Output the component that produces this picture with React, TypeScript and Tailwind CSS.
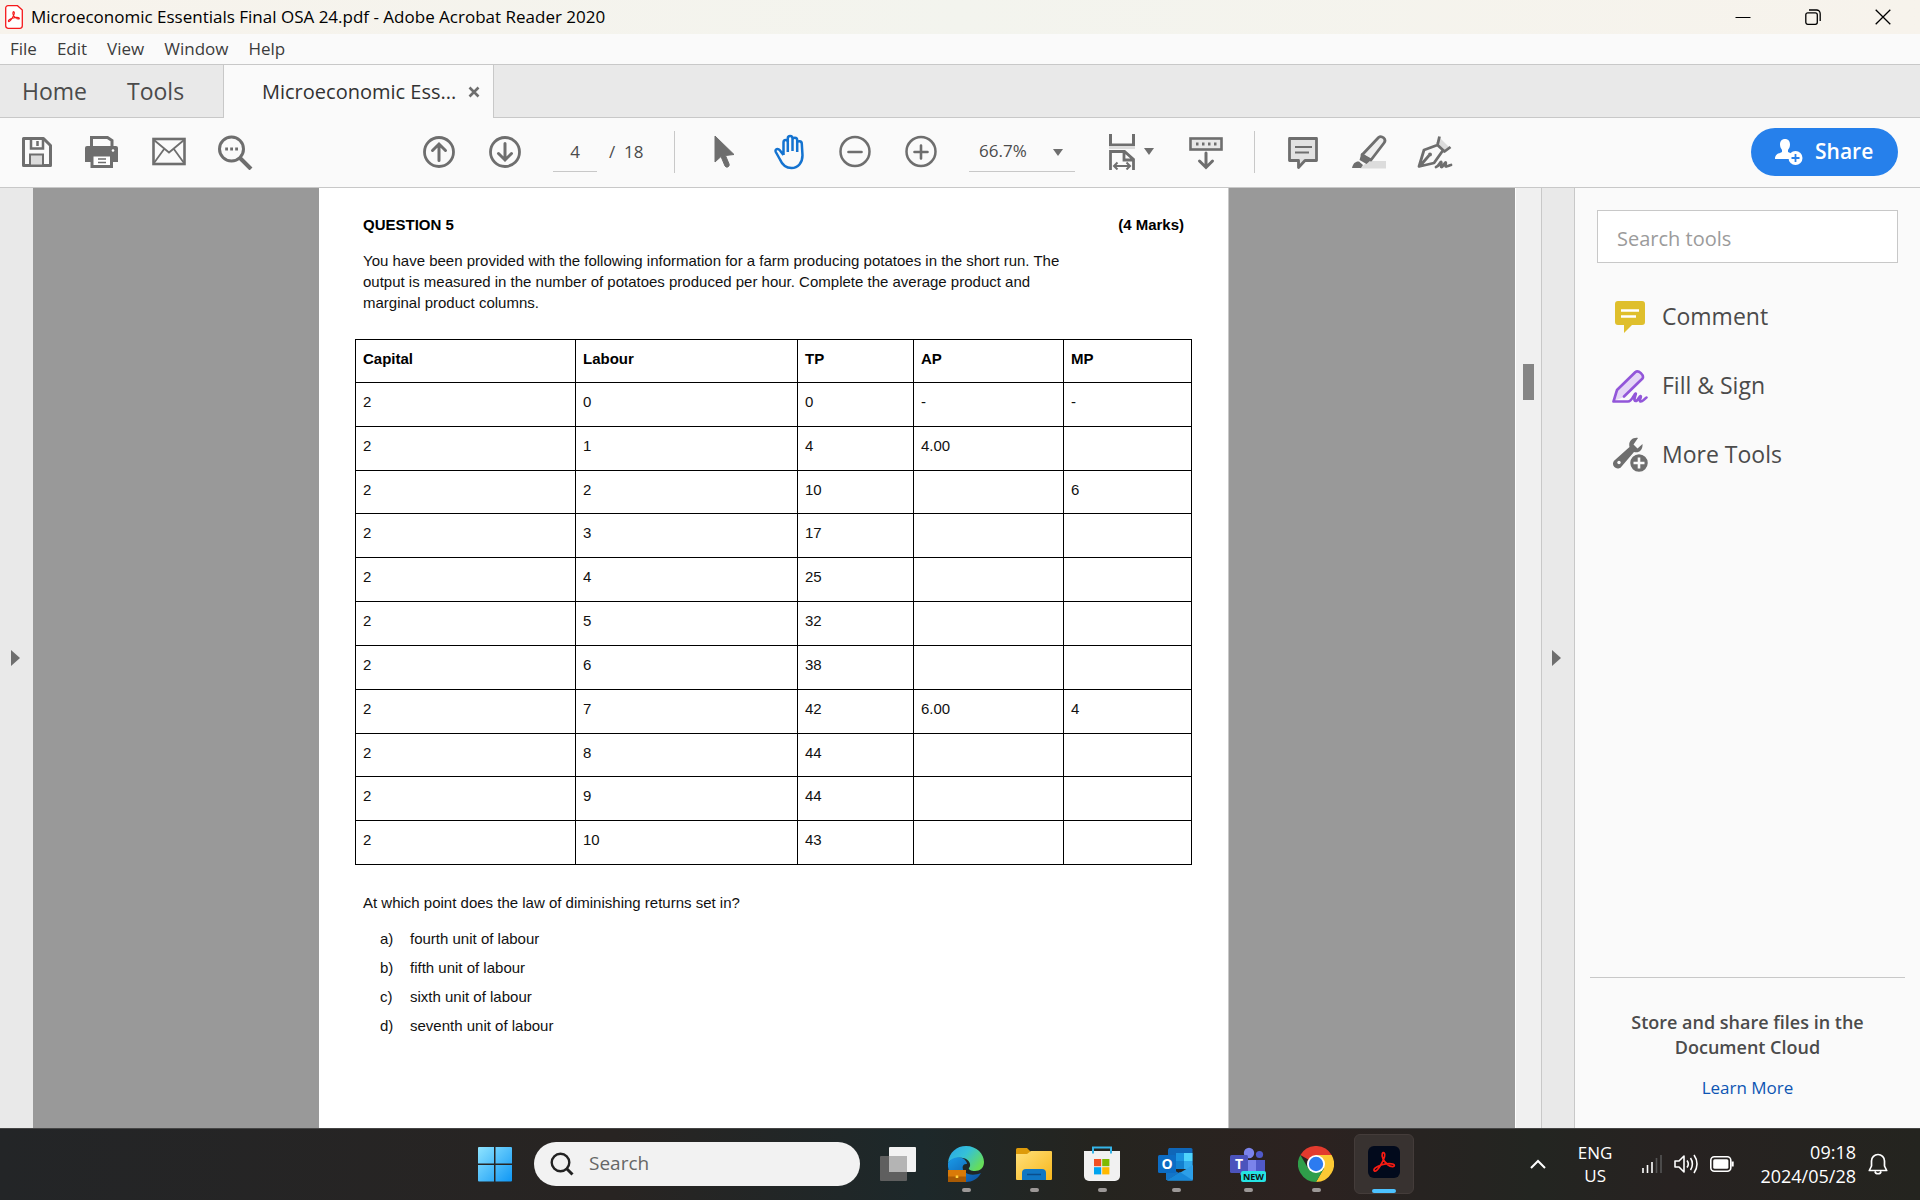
import { useState } from "react";
import type { ReactNode } from "react";

const rows = [
  ["2", "0", "0", "-", "-"],
  ["2", "1", "4", "4.00", ""],
  ["2", "2", "10", "", "6"],
  ["2", "3", "17", "", ""],
  ["2", "4", "25", "", ""],
  ["2", "5", "32", "", ""],
  ["2", "6", "38", "", ""],
  ["2", "7", "42", "6.00", "4"],
  ["2", "8", "44", "", ""],
  ["2", "9", "44", "", ""],
  ["2", "10", "43", "", ""],
];

const answers = [
  ["a)", "fourth unit of labour"],
  ["b)", "fifth unit of labour"],
  ["c)", "sixth unit of labour"],
  ["d)", "seventh unit of labour"],
];

const Icon = ({ children, size = "size-9" }: { children: ReactNode; size?: string }) => (
  <svg viewBox="0 0 36 36" className={size} fill="none" stroke="currentColor" strokeWidth="3">
    {children}
  </svg>
);

const ToolButton = ({ label, children, className = "" }: { label: string; children: ReactNode; className?: string }) => (
  <button aria-label={label} className={"size-9 shrink-0 " + className}>
    <Icon>{children}</Icon>
  </button>
);

const Caret = ({ className = "" }: { className?: string }) => (
  <svg viewBox="0 0 10 7" className={"h-[7px] w-[10px] " + className} fill="currentColor">
    <path d="M0 0h10L5 7z" />
  </svg>
);

const TitleBar = () => (
  <header className="flex h-[34px] shrink-0 items-center bg-linear-to-r from-[#f7f3ec] via-[#f3f4ee] to-[#f7f3ec] pr-0.5 pl-[5px] text-black">
    <svg viewBox="0 0 18 24" className="h-6 w-[18px] text-[#f5191b]" fill="#fff" stroke="currentColor">
      <path d="M3 .7h9.500L17.300 5v15.800a2.500 2.500 0 0 1-2.500 2.500H3A2.500 2.500 0 0 1 .7 20.800V3A2.300 2.300 0 0 1 3 .7z" strokeWidth="1.300" />
      <path d="M3.700 16.500c-1-.7.8-2.300 3.500-3.200 2.500-.8 5.800-1.200 6.900-.3.9 1-1.300 1.600-3.200.1-1.900-1.300-3.500-4-2.900-5.700.5-1.400 1.700-.5 1.200 1.500-.8 2.600-4.200 8.400-5.500 7.600z" fill="none" strokeWidth="1.200" />
    </svg>
    <h1 className="ml-2 flex-1 text-[17px]">Microeconomic Essentials Final OSA 24.pdf - Adobe Acrobat Reader 2020</h1>
    <button aria-label="Minimize" className="flex w-[70px] justify-center">
      <svg viewBox="0 0 16 16" className="size-4" fill="none" stroke="currentColor"><path d="M.5 8.500h15" /></svg>
    </button>
    <button aria-label="Restore" className="flex w-[70px] justify-center">
      <svg viewBox="0 0 16 16" className="size-4" fill="none" stroke="currentColor" strokeWidth="1.300">
        <rect x=".8" y="3.800" width="11.500" height="11.500" rx="2" />
        <path d="M4 1h7.500A3.700 3.700 0 0 1 15.200 4.700V12" />
      </svg>
    </button>
    <button aria-label="Close" className="flex w-[70px] justify-center">
      <svg viewBox="0 0 16 16" className="size-4" fill="none" stroke="currentColor" strokeWidth="1.300"><path d="m.7.7 14.600 14.600M15.300.7.7 15.300" /></svg>
    </button>
  </header>
);

const MenuBar = () => (
  <nav className="flex h-[31px] shrink-0 items-center gap-5 border-b border-[#c8c8c8] bg-[#fafafa] pl-[10px] text-[17px] text-[#3c3c3c]">
    {["File", "Edit", "View", "Window", "Help"].map((item) => (
      <button key={item}>{item}</button>
    ))}
  </nav>
);

const TabBar = () => (
  <div className="flex h-[53px] shrink-0 bg-[#e9e9e9]">
    <div className="flex w-[223px] items-center gap-10 border-b border-[#c8c8c8] pl-[22px] text-[23px] text-[#4b4b4b]">
      <button>Home</button>
      <button>Tools</button>
    </div>
    <div className="flex w-[271px] items-center border-x border-[#c8c8c8] bg-[#fafafa] pl-[38px] text-[#323232]">
      <button className="text-xl">Microeconomic Ess...</button>
      <button aria-label="Close tab" className="ml-3 text-[#6e6e6e]">
        <svg viewBox="0 0 12 12" className="size-3" fill="none" stroke="currentColor" strokeWidth="2.600"><path d="m1.500 1.500 9 9M10.500 1.500l-9 9" /></svg>
      </button>
    </div>
    <div className="flex-1 border-b border-[#c8c8c8]" />
  </div>
);

const Toolbar = () => {
  const [page, setPage] = useState("4");
  const [zoom, setZoom] = useState("66.7%");

  return (
    <div className="flex h-[70px] shrink-0 items-center gap-[30px] border-b border-[#c8c8c8] bg-[#fafafa] pr-[22px] pb-0.5 pl-[19px] text-[#6e6e6e]">
      <ToolButton label="Save">
        <path d="M4.500 4.500h20l7 7v20h-27z" strokeLinejoin="round" />
        <path d="M12 4.500v10h12v-10M18.500 7v5" strokeWidth="2.500" />
        <path d="M11 31.500v-11h13v11z" fill="#dcdcdc" strokeWidth="2" />
      </ToolButton>
      <ToolButton label="Print">
        <path d="M6.500 14V3.500h16l4.500 3V14" />
        <path d="M2 12h29a2 2 0 0 1 2 2v14H0V14a2 2 0 0 1 2-2z" fill="currentColor" stroke="none" />
        <path d="M7 21v11.500h19.500V21z" fill="#fff" strokeWidth="3" />
        <path d="M13 25h8M13 28.500h8" strokeWidth="1.600" />
        <circle cx="28" cy="16.500" r="1.300" fill="#fff" stroke="none" />
      </ToolButton>
      <ToolButton label="Send file by email">
        <rect x="2.500" y="5" width="31" height="25" strokeWidth="2.600" />
        <path d="m3 6 15 12.500L33 6M3 29l10.500-14.500M33 29 22.500 14.500" strokeWidth="1.800" />
      </ToolButton>
      <ToolButton label="Find text">
        <circle cx="14.500" cy="15" r="12" />
        <path d="m23 24 11 11" strokeWidth="4" />
        <path d="M8.200 15h2.800M13.200 15H16M18.200 15H21" strokeWidth="2.800" />
      </ToolButton>
      <ToolButton label="Previous page" className="ml-[138px]">
        <circle cx="18" cy="18" r="14.500" strokeWidth="2.800" />
        <path d="M18 26.500v-16m-6.500 6L18 10l6.500 6.500" strokeLinecap="round" />
      </ToolButton>
      <ToolButton label="Next page">
        <circle cx="18" cy="18" r="14.500" strokeWidth="2.800" />
        <path d="M18 9.500v16m-6.500-6L18 26l6.500-6.500" strokeLinecap="round" />
      </ToolButton>
      <div className="flex items-center gap-3 text-[17px] text-[#4b4b4b]">
        <input
          aria-label="Page number"
          value={page}
          onChange={(e) => setPage(e.target.value)}
          className="h-10 w-11 border-b border-[#c8c8c8] bg-transparent text-center outline-none"
        />
        <span className="w-[35px] whitespace-pre">/  18</span>
      </div>
      <div className="h-[42px] w-px bg-[#c8c8c8]" />
      <ToolButton label="Selection tool">
        <path d="M10 2v26l6-5.500 4 9.500a2.300 2.300 0 0 0 4.200-1.700L20.500 21.500l8.500-1z" fill="currentColor" stroke="currentColor" strokeWidth="1" strokeLinejoin="round" />
      </ToolButton>
      <ToolButton label="Hand tool" className="text-[#1473d0]">
        <path
          d="M10 21V8.500c0-3.200 4.300-3.200 4.300 0V18M14.300 8V4.500c0-3.300 4.700-3.300 4.700 0V17M19 6c0-3 4.700-3 4.700.3V18M23.700 9.500c0-3.300 4.600-3 4.600.3l.7 11.500c0 7.500-4.500 12.700-11 12.700-5.500 0-9.300-3.300-11.500-8.500L2.300 18C1 15 4.500 14 6.300 16.300L10 21"
          transform="translate(2.500 0)"
          strokeWidth="2.500"
          strokeLinejoin="round"
        />
      </ToolButton>
      <ToolButton label="Zoom out">
        <circle cx="18" cy="17.500" r="14.500" strokeWidth="2.500" />
        <path d="M11.500 18h13" strokeLinecap="round" strokeWidth="2.600" />
      </ToolButton>
      <ToolButton label="Zoom in">
        <circle cx="18" cy="17.500" r="14.500" strokeWidth="2.500" />
        <path d="M11.500 18h13M18 11.500v13" strokeLinecap="round" strokeWidth="2.600" />
      </ToolButton>
      <div className="relative">
        <select
          aria-label="Zoom level"
          value={zoom}
          onChange={(e) => setZoom(e.target.value)}
          className="h-10 w-[106px] appearance-none border-b border-[#c8c8c8] bg-transparent pl-[10px] text-[17px] text-[#4b4b4b] outline-none"
        >
          <option>50%</option>
          <option>66.7%</option>
          <option>100%</option>
        </select>
        <Caret className="pointer-events-none absolute top-[17px] right-3" />
      </div>
      <button aria-label="Fit page" className="-ml-px flex w-[54px] shrink-0 items-center gap-1">
        <Icon>
          <path d="M6.500 0v11h23V0" />
          <path d="M5 13.500h26" stroke="#dcdcdc" />
          <path d="M6.500 36V17.500h14l9 8V36M20 17v9h9" strokeWidth="2.800" />
          <path d="M10.500 32h15m-12-3.500L10 32l3.500 3.500m9-7L26 32l-3.500 3.500" strokeWidth="2" />
        </Icon>
        <Caret className="shrink-0" />
      </button>
      <ToolButton label="Read mode">
        <rect x="2.500" y="4.500" width="31" height="11" fill="#e8e8e8" strokeWidth="2.600" />
        <path d="M8 10h2.500M14 10h2.500M20 10h2.500M26 10h2.500" />
        <path d="M18 19v14m-6.500-6L18 33.500l6.500-6.500" strokeLinecap="round" />
      </ToolButton>
      <div className="h-[42px] w-px bg-[#c8c8c8]" />
      <ToolButton label="Add comment">
        <path d="M4.500 4.500h27v22H20l-6.500 7v-7h-9z" fill="#e2e2e2" strokeWidth="2.800" strokeLinejoin="round" />
        <path d="M10 13h17M10 18.500h14" strokeWidth="1.800" />
      </ToolButton>
      <ToolButton label="Highlight">
        <path d="M9 34.500h26V27H17z" fill="#dcdcdc" stroke="none" />
        <path d="M27.500 3.500c3-2.500 8.500 1.500 5.500 5.500L20 26l-9-5z" fill="#eee" strokeWidth="2.800" strokeLinejoin="round" />
        <path d="m10.500 19 10 6.500-5 4.500-7-4zM1 34c1-5 4-7 7-6.500L12 31l-2 3z" fill="currentColor" stroke="none" />
      </ToolButton>
      <ToolButton label="Sign">
        <path d="m23 4 10 10-4 3-10-8z" fill="#dcdcdc" stroke="none" />
        <path d="m22.500 2.500-2 8.500 7 6.500 6-4.500M20.500 11 7 16 2 32.500 17 29l8.500-12M3 32l9-10.500" strokeWidth="2.800" strokeLinejoin="round" />
        <circle cx="13" cy="20.500" r="2" fill="currentColor" stroke="none" />
        <path d="M19 33c3-1 4-5 5-5s-1 5 .5 5 3-4.500 4-4.500-1 4 .5 4 3-1 5-1.500" strokeWidth="2.800" strokeLinecap="round" />
      </ToolButton>
      <button className="ml-auto flex h-12 w-[147px] items-center rounded-full bg-[#2680eb] pl-6 text-[21px] font-semibold text-white">
        <svg viewBox="0 0 28 28" className="mr-3 size-7" fill="#fff">
          <path d="M10 1c3.200 0 5 2.200 5 5.500 0 2.500-1 4-2 5.500v2c1.500.8 3 1.400 4.200 2.300-2 1.200-3.400 3.200-3.200 4.700H0c0-5 4-5.500 7-7v-2C6 10.500 5 9 5 6.500 5 3.200 6.800 1 10 1z" />
          <circle cx="20.500" cy="20" r="7" />
          <path d="M20.500 16v8M16.500 20h8" stroke="#2680eb" strokeWidth="1.800" />
        </svg>
        Share
      </button>
    </div>
  );
};

const Document = () => (
  <article className="min-h-full w-[910px] border-r border-[#c8c8c8] bg-white pt-[26px] pl-9 font-['Liberation_Sans',Arial,sans-serif] text-[15px] leading-[21px] text-[#111]">
    <div className="flex w-[829px] justify-between pl-2 font-bold text-black">
      <h2>QUESTION 5</h2>
      <span>(4 Marks)</span>
    </div>
    <p className="mt-[15px] w-[740px] pl-2">
      You have been provided with the following information for a farm producing potatoes in the short run. The
      <br />
      output is measured in the number of potatoes produced per hour. Complete the average product and
      <br />
      marginal product columns.
    </p>
    <table className="mt-[26px] h-[526px] w-[837px] table-fixed border-collapse text-left">
      <colgroup>
        <col className="w-[220px]" />
        <col className="w-[222px]" />
        <col className="w-[116px]" />
        <col className="w-[150px]" />
        <col />
      </colgroup>
      <thead>
        <tr className="h-[43px]">
          {["Capital", "Labour", "TP", "AP", "MP"].map((name) => (
            <th key={name} className="border border-black px-[7px] pt-2 align-top font-bold text-black">
              {name}
            </th>
          ))}
        </tr>
      </thead>
      <tbody>
        {rows.map((row) => (
          <tr key={row[1]}>
            {row.map((cell, i) => (
              <td key={i} className="border border-black px-[7px] pt-2 align-top">
                {cell}
              </td>
            ))}
          </tr>
        ))}
      </tbody>
    </table>
    <p className="mt-[27px] pl-2">At which point does the law of diminishing returns set in?</p>
    <ol className="mt-[11px] pl-[25px] leading-[29px]">
      {answers.map(([mark, text]) => (
        <li key={mark} className="flex">
          <span className="w-[30px]">{mark}</span>
          {text}
        </li>
      ))}
    </ol>
  </article>
);

const ToolsPanel = () => (
  <aside className="flex w-[346px] shrink-0 flex-col border-l border-[#c8c8c8] bg-[#fafafa] text-[#4b4b4b]">
    <input
      aria-label="Search tools"
      placeholder="Search tools"
      className="mx-[22px] mt-[22px] h-[53px] border border-[#c8c8c8] bg-white px-[19px] pt-1 text-xl outline-none placeholder:text-[#9b9b9b]"
    />
    <div className="mt-[19px] flex flex-col pl-[37px] text-[23px]">
      <button className="flex h-[69px] items-center gap-[14px]">
        <Icon>
          <path d="M6 2h24a3 3 0 0 1 3 3v18a3 3 0 0 1-3 3H20l-8 8v-8H6a3 3 0 0 1-3-3V5a3 3 0 0 1 3-3z" fill="#dfbf2c" stroke="none" />
          <path d="M9 11.500h18M9 17.500h15" stroke="#fff" strokeWidth="2.500" />
        </Icon>
        Comment
      </button>
      <button className="flex h-[69px] items-center gap-[14px] text-[#9256d9]">
        <Icon>
          <path d="M22 3.500c2.500-3 9.500 2.500 7.500 6L12 29l-10.500 4 3-12z" fill="#e5d7f6" stroke="none" />
          <path d="M12 28.500 30.500 10.500c2-3-4-9-7-6.500L5 22 1.500 33.500H16c4 0 6-7.500 7.500-8s-3 7.500 0 7.500 3.500-5.500 5-5-2 5 0 5.500 3-2 6-4" strokeWidth="2.600" strokeLinejoin="round" strokeLinecap="round" />
        </Icon>
        <span className="text-[#4b4b4b]">Fill &amp; Sign</span>
      </button>
      <button className="flex h-[69px] items-center gap-[14px]">
        <Icon>
          <path d="M26 1c-5-1-10 3-8.500 9L3.500 22.500a4.800 4.800 0 1 0 6.500 6.500L22 15c5 1.500 9-2 8.500-8l-5 4.500-4-4z" fill="#6e6e6e" stroke="none" />
          <circle cx="7" cy="25.500" r="1.700" fill="#fafafa" stroke="none" />
          <circle cx="27" cy="26" r="9.500" fill="#6e6e6e" stroke="#fafafa" strokeWidth="1.500" />
          <path d="M27 20.500v11M21.500 26h11" stroke="#fafafa" strokeWidth="2.600" />
        </Icon>
        More Tools
      </button>
    </div>
    <div className="mx-[15px] mt-auto border-t border-[#c8c8c8] pt-8 pb-7 text-center">
      <p className="text-lg leading-[25px] font-semibold">
        Store and share files in the
        <br />
        Document Cloud
      </p>
      <a href="#learn" className="mt-4 inline-block text-[17px] leading-6 text-[#0d55b3]">
        Learn More
      </a>
    </div>
  </aside>
);

const EdgeIcon = () => (
  <svg viewBox="0 0 36 36" className="size-9">
    <defs>
      <linearGradient id="edgeTop" x1="0" x2="1" y2=".6">
        <stop stopColor="#2aa5e8" />
        <stop offset=".5" stopColor="#35c1d8" />
        <stop offset="1" stopColor="#66dd5a" />
      </linearGradient>
      <linearGradient id="edgeLow" x2="1" y2="1">
        <stop stopColor="#1a9be8" />
        <stop offset="1" stopColor="#0c4fa0" />
      </linearGradient>
    </defs>
    <path d="M0 17C1 6 9 0 18 0c11 0 18 8 18 16 0 6-4 9-9 9-4 0-7-1.500-6-3 3-3 0-9-6-10C9 11 3 13 0 17z" fill="url(#edgeTop)" />
    <path d="M0 17c3-5 9-7 14-5 3 1 5 4 5 6-6-1-6 8 1 10 5 1.500 9 .5 13-1-3 6-9 9-15 9C7 36-1 28 0 17z" fill="url(#edgeLow)" />
    <path d="M0 24h18v12H1.500A1.500 1.500 0 0 1 0 34.500z" fill="#d97a08" />
    <path d="M0 30.500h18V36H0z" fill="#a85a04" />
    <path d="M7.700 29.500h2.600V32H7.700z" fill="#ffd23c" />
  </svg>
);

const FolderIcon = () => (
  <svg viewBox="0 0 36 36" className="size-9">
    <defs>
      <linearGradient id="folder" x2="1" y2="1">
        <stop stopColor="#ffe07a" />
        <stop offset="1" stopColor="#f8b71c" />
      </linearGradient>
    </defs>
    <path d="M0 3.500A1.500 1.500 0 0 1 1.500 2H11l4 4-3 4H0z" fill="#dd9a0a" />
    <path d="M0 8h11l4-3h20a1 1 0 0 1 1 1v27a1 1 0 0 1-1 1H1a1 1 0 0 1-1-1z" fill="url(#folder)" />
    <path d="M6 34v-7a4 4 0 0 1 4-4h16a4 4 0 0 1 4 4v7z" fill="#1077c4" />
    <path d="M11 28.500h14" stroke="#0a4e8c" strokeWidth="1.500" />
  </svg>
);

const StoreIcon = () => (
  <svg viewBox="0 0 36 36" className="size-9">
    <path d="M9 7.500V1.500h18v6" fill="none" stroke="#35b4e8" strokeWidth="2" />
    <path d="M0 5h36v25a5 5 0 0 1-5 5H5a5 5 0 0 1-5-5z" fill="#f1f1f1" />
    <path d="M9 5v2.500M27 5v2.500" stroke="#35b4e8" strokeWidth="2" />
    <path d="M10 13h7.200v7.200H10z" fill="#f25022" />
    <path d="M18.200 13h7.200v7.200h-7.200z" fill="#7fba00" />
    <path d="M10 21.200h7.200v7.200H10z" fill="#00a4ef" />
    <path d="M18.200 21.200h7.200v7.200h-7.200z" fill="#ffb900" />
  </svg>
);

const OutlookIcon = () => (
  <svg viewBox="0 0 36 36" className="size-9 font-bold">
    <path d="M11 2h22a1.500 1.500 0 0 1 1.500 1.500V22H10V3.500z" fill="#0f66b8" />
    <path d="M18 7h8v8h-8z" fill="#1b93e0" />
    <path d="M26 7h8.500v8H26z" fill="#4fd4fb" />
    <path d="M18 15h8v8h-8z" fill="#1380cf" />
    <path d="M26 15h8.500v8H26z" fill="#31a9ec" />
    <path d="M8 20l13 7-11 7H8z" fill="#1374c8" />
    <path d="M35 19v14a1.500 1.500 0 0 1-1.500 1.500H9L35 19z" fill="#2c9fe8" />
    <path d="M9 34.500 22 26l13 8.500z" fill="#1787d8" />
    <rect y="9" width="18" height="18" rx="1.500" fill="#0c6cc4" />
    <text x="9" y="23" textAnchor="middle" fontSize="14" fill="#fff">O</text>
  </svg>
);

const TeamsIcon = () => (
  <svg viewBox="0 0 36 36" className="size-9 font-bold">
    <circle cx="19" cy="7" r="5.200" fill="#7b83eb" />
    <circle cx="29.500" cy="8.500" r="3.600" fill="#5059c9" />
    <path d="M24 14h11v10c0 3-2 6-6 6h-5z" fill="#5059c9" />
    <path d="M10 14h16v12a8 8 0 0 1-16 0z" fill="#7b83eb" />
    <rect y="9" width="18" height="18" rx="1.500" fill="#4b53bc" />
    <text x="9" y="23" textAnchor="middle" fontSize="14" fill="#fff">T</text>
    <rect x="11" y="25" width="25" height="11" rx="2" fill="#25e3e3" />
    <text x="23.500" y="34" textAnchor="middle" fontSize="9" fill="#111">NEW</text>
  </svg>
);

const ChromeIcon = () => (
  <svg viewBox="0 0 36 36" className="size-9">
    <path d="M18 18 2.400 9A18 18 0 0 1 33.600 9z" fill="#e33b2e" />
    <path d="M18 18V9h15.600A18 18 0 0 1 18 36l7.800-13.500z" fill="#fcc934" />
    <path d="M2.400 9A18 18 0 0 0 18 36l7.800-13.500L18 18l-7.800 4.500z" fill="#2f9e4a" />
    <circle cx="18" cy="18" r="9" fill="#fff" />
    <circle cx="18" cy="18" r="7.200" fill="#2c7bf0" />
  </svg>
);

const TaskButton = ({ label, children, className = "", open = true }: { label: string; children: ReactNode; className?: string; open?: boolean }) => (
  <button aria-label={label} className={"relative flex size-9 shrink-0 items-center justify-center " + className}>
    {children}
    {open && <span className="absolute top-[42px] h-1 w-[9px] rounded-full bg-[#9c9897]" />}
  </button>
);

const Taskbar = () => (
  <footer className="flex h-[72px] shrink-0 items-center border-t border-[#454545] bg-[linear-gradient(90deg,#232527_0%,#282422_32%,#1d282a_48%,#25241f_57%,#2c2220_68%,#272321_74%,#232521_80%,#272221_87%,#24241f_100%)] pb-0.5 text-white">
    <div className="flex-1" />
    <div className="flex items-center gap-8 pl-[3px]">
      <div className="-mr-3 flex items-center gap-[21px]">
        <button aria-label="Start">
          <svg viewBox="0 0 36 36" className="size-9">
            <defs>
              <linearGradient id="win" x2="1" y2="1">
                <stop stopColor="#8fe4ff" />
                <stop offset="1" stopColor="#0f97f5" />
              </linearGradient>
            </defs>
            <path d="M1 2a1 1 0 0 1 1-1h15v16.500H1zM18.500 1H34a1 1 0 0 1 1 1v15.500H18.500zM1 19h16v16.500H2a1 1 0 0 1-1-1zM18.500 19H35v15.500a1 1 0 0 1-1 1H18.500z" fill="url(#win)" />
          </svg>
        </button>
        <label className="flex h-11 w-[326px] items-center gap-[15px] rounded-full bg-[#f2f2f2] pl-4">
          <svg viewBox="0 0 24 24" className="size-6 shrink-0" fill="none" stroke="#222" strokeWidth="2.400">
            <circle cx="10.500" cy="10.500" r="8.800" />
            <path d="m16.500 16.500 6 6" strokeWidth="3" />
          </svg>
          <input aria-label="Search" placeholder="Search" className="w-60 bg-transparent text-[19px] outline-none placeholder:text-[#666]" />
        </label>
      </div>
      <TaskButton label="Task view" open={false}>
        <svg viewBox="0 0 36 36" className="size-9">
          <rect x="9" y="1" width="27" height="25" rx="1" fill="#f2f2f2" />
          <rect y="10" width="27" height="25" rx="1" fill="#5f5f5f" />
          <path d="M9 10h18v16H9z" fill="#b4b4b4" />
        </svg>
      </TaskButton>
      <TaskButton label="Edge"><EdgeIcon /></TaskButton>
      <TaskButton label="File Explorer"><FolderIcon /></TaskButton>
      <TaskButton label="Microsoft Store"><StoreIcon /></TaskButton>
      <TaskButton label="Outlook" className="ml-1.5"><OutlookIcon /></TaskButton>
      <TaskButton label="Teams" className="ml-1"><TeamsIcon /></TaskButton>
      <TaskButton label="Chrome"><ChromeIcon /></TaskButton>
      <button aria-label="Acrobat Reader" className="relative -ml-3 flex size-15 items-center justify-center rounded-md border border-[#443c3a] bg-[#383230]">
        <span className="mb-1 flex size-8 items-center justify-center rounded-md bg-[#020a1c] text-[#fa1b12]">
          <svg viewBox="0 0 24 24" className="size-6" fill="none" stroke="currentColor" strokeWidth="1.700" strokeLinejoin="round">
            <path d="M2.500 21c-2-1.400 1.600-4.600 7.500-6.300 5-1.400 11-1.600 12.200.2.900 2-3 2.700-6.700-.4-3.600-2.800-6.400-7.700-5.200-10.800 1-2.300 3.200-.8 2.200 3C11.200 11.400 5 22.500 2.500 21z" />
          </svg>
        </span>
        <span className="absolute bottom-0 h-1 w-6 rounded-full bg-[#4cc2ff]" />
      </button>
    </div>
    <div className="flex flex-1 items-center justify-end pr-8 text-[17px] leading-6">
      <button aria-label="Show hidden icons" className="mr-8">
        <svg viewBox="0 0 16 10" className="h-[10px] w-4" fill="none" stroke="currentColor" strokeWidth="2"><path d="m1 9 7-7 7 7" /></svg>
      </button>
      <button className="mr-[30px] text-center leading-[23px]">
        ENG
        <br />
        US
      </button>
      <button aria-label="Network, volume and battery" className="mr-[26px] flex items-center gap-3">
        <svg viewBox="0 0 20 20" className="size-5" fill="none" stroke="currentColor" strokeWidth="1.600">
          <path d="M1 19v-5M5.500 19v-8M10 19V8" />
          <path d="M14.500 19V4M19 19V1" stroke="#555" />
        </svg>
        <svg viewBox="0 0 24 20" className="h-5 w-6" fill="none" stroke="currentColor" strokeWidth="1.600" strokeLinejoin="round">
          <path d="M1 7h4l5-5v16l-5-5H1zM13 6.500c1.500 2 1.500 5 0 7M16.500 4c2.500 3.500 2.500 8.500 0 12M20 1c4 5.500 4 12.500 0 18" />
        </svg>
        <svg viewBox="0 0 24 16" className="h-4 w-6" fill="none" stroke="currentColor" strokeWidth="1.600">
          <rect x=".8" y=".8" width="20" height="14.400" rx="3.500" />
          <rect x="3.200" y="3.200" width="15.200" height="9.600" rx="1.500" fill="currentColor" stroke="none" />
          <path d="M22.600 5.500v5" strokeWidth="2.200" />
        </svg>
      </button>
      <button className="mr-3 text-right text-lg leading-6">
        09:18
        <br />
        2024/05/28
      </button>
      <button aria-label="Notifications">
        <svg viewBox="0 0 20 22" className="h-[22px] w-5" fill="none" stroke="currentColor" strokeWidth="1.700" strokeLinejoin="round">
          <path d="M3.500 8a6.500 6.500 0 0 1 13 0v5l2.200 4.500H1.300L3.500 13zM7 18.500c.5 3 5.500 3 6 0" />
        </svg>
      </button>
    </div>
  </footer>
);

export default function App() {
  return (
    <div className="flex h-screen flex-col overflow-hidden font-['Open_Sans','Noto_Sans',sans-serif]">
      <TitleBar />
      <MenuBar />
      <TabBar />
      <Toolbar />
      <main className="flex min-h-0 flex-1">
        <button aria-label="Open navigation pane" className="flex w-[33px] shrink-0 items-center bg-[#e9e9e9] pl-[11px] text-[#6e6e6e]">
          <svg viewBox="0 0 9 16" className="h-4 w-[9px]" fill="currentColor"><path d="M0 0v16l9-8z" /></svg>
        </button>
        <div className="flex min-w-0 flex-1 justify-center overflow-hidden bg-[#999]">
          <Document />
        </div>
        <div className="w-[26px] shrink-0 border-l border-white bg-[#f0f0f0] pt-44 pl-[7px]">
          <div className="h-9 w-[11px] bg-[#858585]" />
        </div>
        <button aria-label="Collapse tools pane" className="flex w-[33px] shrink-0 items-center border-l border-[#c8c8c8] bg-[#e9e9e9] pl-[10px] text-[#6e6e6e]">
          <svg viewBox="0 0 9 16" className="h-4 w-[9px]" fill="currentColor"><path d="M0 0v16l9-8z" /></svg>
        </button>
        <ToolsPanel />
      </main>
      <Taskbar />
    </div>
  );
}
